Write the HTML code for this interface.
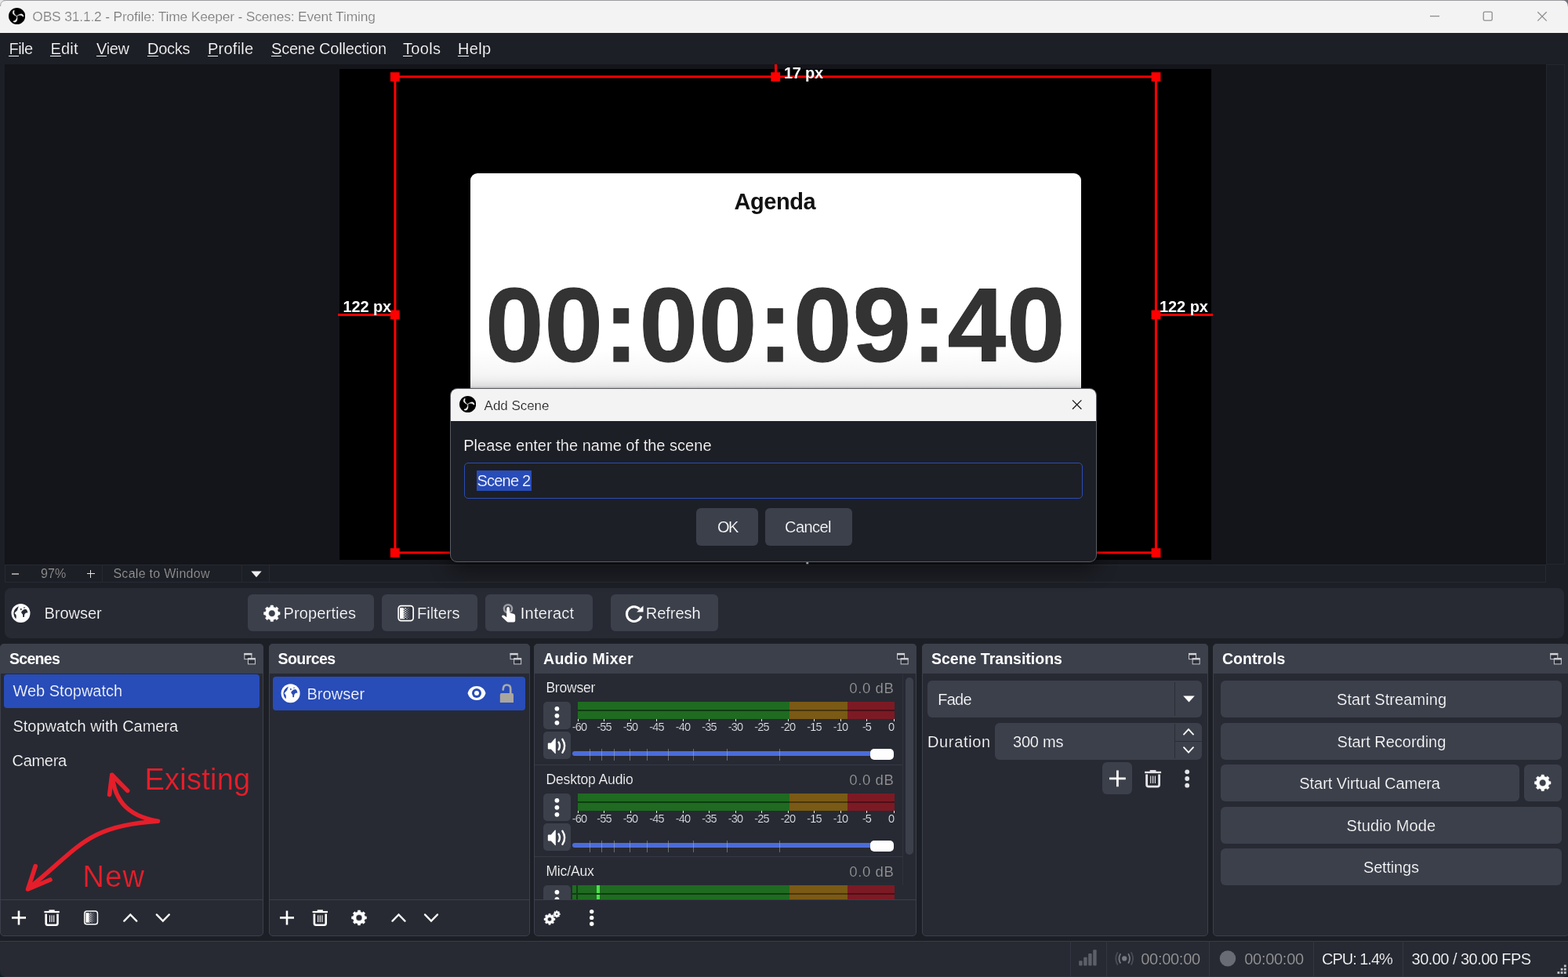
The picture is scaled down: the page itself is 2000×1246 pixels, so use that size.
<!DOCTYPE html>
<html lang="en"><head><meta charset="utf-8"><title>OBS 31.1.2 - Profile: Time Keeper - Scenes: Event Timing</title>
<style>
*{box-sizing:border-box;margin:0;padding:0}
html,body{width:2000px;height:1246px;overflow:hidden;background:#1d1f26}
body{font-family:"Liberation Sans",sans-serif;}
#app{will-change:transform;position:relative;width:2000px;height:1246px;overflow:hidden;background:#1d1f26}
#app div,#app span.t,#app svg{position:absolute}
.t{white-space:pre;display:block}
u{text-decoration:underline;text-decoration-thickness:1.4px;text-underline-offset:1.3px}

</style></head>
<body>
<div id="app">
<div style="left:0px;top:0px;width:2000px;height:42px;background:#f3f3f3;"></div>
<div style="left:0px;top:0px;width:2000px;height:1px;background:#9c9ca0;"></div>
<svg style="left:10.700000000000001px;top:10.000000000000002px;" width="21.2" height="21.2" viewBox="0 0 100 100"><circle cx="50" cy="50" r="50" fill="#000"/><g fill="#f3f3f3" stroke="#f3f3f3" stroke-width="1.8" stroke-linejoin="round"><path d="M30.5 15 Q10 35 50 51.5 Q27 36 34.5 16 Z"/><g transform="rotate(120 50 50)"><path d="M30.5 15 Q10 35 50 51.5 Q27 36 34.5 16 Z"/></g><g transform="rotate(240 50 50)"><path d="M30.5 15 Q10 35 50 51.5 Q27 36 34.5 16 Z"/></g></g></svg>
<span id="t1" class="t" style="left:41.30px;top:13.47px;font-size:17.4px;line-height:17.4px;color:#787878;letter-spacing:-0.164px;-webkit-text-stroke:0.22px #f3f3f3;">OBS 31.1.2 - Profile: Time Keeper - Scenes: Event Timing</span>
<svg style="left:0;top:0;overflow:visible" width="1" height="1"><path d="M0 0H8Q0 0 0 8Z" fill="#e6e6e6"/><path d="M0.5 8Q0.5 0.5 8 0.5" fill="none" stroke="#a4a4a8" stroke-width="1"/></svg>
<svg style="left:0;top:0;overflow:visible" width="1" height="1"><path d="M2000 0H1991Q2000 0 2000 9Z" fill="#6f7179"/></svg>
<svg style="left:1815px;top:8px;" width="170" height="26" viewBox="0 0 170 26"><g fill="none" stroke="#8e8e8e" stroke-width="1.3"><path d="M9 12.6H21"/><rect x="77.2" y="7.2" width="11" height="11" rx="1.6"/><path d="M146.3 7.2L157.7 18.6M157.7 7.2L146.3 18.6"/></g></svg>
<div style="left:0px;top:42px;width:2000px;height:40px;background:#1d1f26;"></div>
<span id="t2" class="t" style="left:11.50px;top:51.87px;font-size:20px;line-height:20px;color:#fefefe;letter-spacing:-0.535px;-webkit-text-stroke:0.22px #1d1f26;">File</span>
<div style="left:11.20px;top:70.50px;width:12.52px;height:1.4px;background:#fefefe"></div>
<span id="t3" class="t" style="left:64.50px;top:51.87px;font-size:20px;line-height:20px;color:#fefefe;letter-spacing:0.198px;-webkit-text-stroke:0.22px #1d1f26;">Edit</span>
<div style="left:64.20px;top:70.50px;width:13.64px;height:1.4px;background:#fefefe"></div>
<span id="t4" class="t" style="left:123.00px;top:51.87px;font-size:20px;line-height:20px;color:#fefefe;letter-spacing:-0.348px;-webkit-text-stroke:0.22px #1d1f26;">View</span>
<div style="left:122.70px;top:70.50px;width:13.64px;height:1.4px;background:#fefefe"></div>
<span id="t5" class="t" style="left:188.00px;top:51.87px;font-size:20px;line-height:20px;color:#fefefe;letter-spacing:-0.267px;-webkit-text-stroke:0.22px #1d1f26;">Docks</span>
<div style="left:187.70px;top:70.50px;width:14.74px;height:1.4px;background:#fefefe"></div>
<span id="t6" class="t" style="left:265.00px;top:51.87px;font-size:20px;line-height:20px;color:#fefefe;letter-spacing:0.239px;-webkit-text-stroke:0.22px #1d1f26;">Profile</span>
<div style="left:264.70px;top:70.50px;width:13.64px;height:1.4px;background:#fefefe"></div>
<span id="t7" class="t" style="left:346.00px;top:51.87px;font-size:20px;line-height:20px;color:#fefefe;letter-spacing:-0.198px;-webkit-text-stroke:0.22px #1d1f26;">Scene Collection</span>
<div style="left:345.70px;top:70.50px;width:13.64px;height:1.4px;background:#fefefe"></div>
<span id="t8" class="t" style="left:514.00px;top:51.87px;font-size:20px;line-height:20px;color:#fefefe;letter-spacing:0.328px;-webkit-text-stroke:0.22px #1d1f26;">Tools</span>
<div style="left:513.70px;top:70.50px;width:12.52px;height:1.4px;background:#fefefe"></div>
<span id="t9" class="t" style="left:584.00px;top:51.87px;font-size:20px;line-height:20px;color:#fefefe;letter-spacing:0.330px;-webkit-text-stroke:0.22px #1d1f26;">Help</span>
<div style="left:583.70px;top:70.50px;width:14.74px;height:1.4px;background:#fefefe"></div>
<div style="left:6px;top:82px;width:1966px;height:638px;background:#14151a;"></div>
<div style="left:1972px;top:82px;width:24px;height:638px;background:#1b1d25;border:1px solid #25272f;"></div>
<div style="left:433px;top:88px;width:1112px;height:626px;background:#000;"></div>
<div style="left:600px;top:221px;width:779px;height:300px;background:linear-gradient(#fff 0,#fff 225px,#f4f4f4 262px,#ececec 275px);border-radius:9px 9px 0 0;"></div>
<span id="t10" class="t" style="left:936.50px;top:243.45px;font-size:29px;line-height:29px;color:#111;font-weight:700;letter-spacing:-0.443px;">Agenda</span>
<span id="t11" class="t" style="left:619.00px;top:347.57px;font-size:134px;line-height:134px;color:#333;font-weight:700;letter-spacing:0.946px;-webkit-text-stroke:0.9px #2b2b2b;">00:00:09:40</span>
<svg style="left:0;top:0;overflow:visible" width="1" height="1"><rect x="503.9" y="97.9" width="970.5" height="607" fill="none" stroke="#ff0000" stroke-width="3"/></svg>
<svg style="left:0;top:0;overflow:visible" width="1" height="1"><rect x="497.90000000000003" y="92.2" width="11.8" height="11.6" fill="#ff0000"/></svg>
<svg style="left:0;top:0;overflow:visible" width="1" height="1"><rect x="1468.6" y="92.2" width="11.8" height="11.6" fill="#ff0000"/></svg>
<svg style="left:0;top:0;overflow:visible" width="1" height="1"><rect x="497.90000000000003" y="699.2" width="11.8" height="11.6" fill="#ff0000"/></svg>
<svg style="left:0;top:0;overflow:visible" width="1" height="1"><rect x="1468.6" y="699.2" width="11.8" height="11.6" fill="#ff0000"/></svg>
<svg style="left:0;top:0;overflow:visible" width="1" height="1"><rect x="983.3000000000001" y="92.2" width="11.8" height="11.6" fill="#ff0000"/></svg>
<svg style="left:0;top:0;overflow:visible" width="1" height="1"><rect x="497.90000000000003" y="395.59999999999997" width="11.8" height="11.6" fill="#ff0000"/></svg>
<svg style="left:0;top:0;overflow:visible" width="1" height="1"><rect x="1468.6" y="395.59999999999997" width="11.8" height="11.6" fill="#ff0000"/></svg>
<svg style="left:0;top:0;overflow:visible" width="1" height="1"><rect x="983.3000000000001" y="699.2" width="11.8" height="11.6" fill="#ff0000"/></svg>
<div style="left:987.5px;top:82px;width:3px;height:12px;background:#ff0000;"></div>
<div style="left:431px;top:400px;width:73px;height:3px;background:#ff0000;"></div>
<div style="left:1474px;top:400px;width:73px;height:3px;background:#ff0000;"></div>
<div style="left:987.5px;top:705px;width:3px;height:9px;background:#ff0000;"></div>
<span id="t12" class="t" style="left:1000.00px;top:83.07px;font-size:20px;line-height:20px;color:#fff;font-weight:700;letter-spacing:-0.255px;text-shadow:0 0 1.5px rgba(0,0,0,0.6);">17 px</span>
<span id="t13" class="t" style="left:437.50px;top:380.67px;font-size:20px;line-height:20px;color:#fff;font-weight:700;letter-spacing:-0.129px;text-shadow:0 0 1.5px rgba(0,0,0,0.6);">122 px</span>
<span id="t14" class="t" style="left:1479.00px;top:380.67px;font-size:20px;line-height:20px;color:#fff;font-weight:700;letter-spacing:-0.069px;text-shadow:0 0 1.5px rgba(0,0,0,0.6);">122 px</span>
<span id="t15" class="t" style="left:1000.00px;top:699.27px;font-size:20px;line-height:20px;color:#fff;font-weight:700;letter-spacing:-0.255px;text-shadow:0 0 1.5px rgba(0,0,0,0.6);clip-path:inset(0 0 0 0);">18 px</span>
<div style="left:6px;top:720px;width:1966px;height:23px;background:#1d1f26;border:1px solid #262932;"></div>
<div style="left:130px;top:720px;width:1px;height:23px;background:#262932;"></div>
<div style="left:308px;top:720px;width:1px;height:23px;background:#262932;"></div>
<div style="left:343px;top:720px;width:1px;height:23px;background:#262932;"></div>
<div style="left:14.8px;top:731.2px;width:9.5px;height:1.6px;background:#999999;"></div>
<div style="left:110.5px;top:730.8px;width:10px;height:1.6px;background:#e6e6e6;"></div>
<div style="left:114.7px;top:726.6px;width:1.6px;height:10px;background:#e6e6e6;"></div>
<span id="t16" class="t" style="left:52.00px;top:724.06px;font-size:16px;line-height:16px;color:#999999;letter-spacing:0.102px;-webkit-text-stroke:0.22px #1d1f26;">97%</span>
<span id="t17" class="t" style="left:144.40px;top:724.06px;font-size:16px;line-height:16px;color:#999999;letter-spacing:0.285px;-webkit-text-stroke:0.22px #1d1f26;">Scale to Window</span>
<svg style="left:320px;top:727.5px;" width="14" height="9" viewBox="0 0 14 9"><path d="M0.3 0.5H13.7L7 8.3Z" fill="#f0f0f0"/></svg>
<div style="left:6px;top:749.5px;width:1989px;height:64.5px;background:#272a33;border-radius:8px;"></div>
<svg style="left:0;top:0;overflow:visible" width="1" height="1"><g transform="translate(26.5 782) scale(1.0)"><circle r="12" fill="#fefefe"/><path d="M-3.2 -8.4 C-6.4 -6.8 -8.6 -4 -9.1 -0.6 C-9.2 2.2 -8.4 4.8 -6.5 6.9 L-6.0 6.8 C-5.7 5.2 -5.6 3.6 -6.1 2.3 C-6.7 1.3 -7.6 0.7 -7.9 -0.2 C-7.4 -1 -6.6 -1.4 -6.0 -2.2 C-5.2 -3 -4.4 -3.6 -4.2 -4.6 C-3.8 -6 -3.2 -7.2 -2.8 -8.5 Z" fill="#272a33"/><path d="M2.8 -3.8 C3.4 -4.6 5 -5.2 6.8 -5.0 C7.8 -4 8.6 -2.4 8.9 -0.8 C8.2 -0.4 7.2 -0.6 6.4 -0.3 C5.6 0.2 5 0.9 4.7 1.7 C4.5 2.8 4.6 3.9 4.4 4.9 C3.8 5.2 3.2 5.1 2.7 4.8 C2.6 3.8 2.8 2.7 2.6 1.7 C2.2 0.9 1.4 0.5 0.9 -0.2 C0.7 -0.8 0.7 -1.4 0.9 -2 C1.4 -2.7 2.2 -3.2 2.8 -3.8Z" fill="#272a33"/><ellipse cx="0.3" cy="-5.1" rx="0.85" ry="1.25" fill="#272a33"/><rect x="3.2" y="-7.5" width="2.5" height="0.9" rx="0.45" fill="#272a33"/></g></svg>
<span id="t18" class="t" style="left:56.50px;top:772.27px;font-size:20px;line-height:20px;color:#fefefe;letter-spacing:-0.032px;-webkit-text-stroke:0.22px #272a33;">Browser</span>
<div style="left:316px;top:758.3px;width:161px;height:47px;background:#3c404b;border-radius:6px;"></div>
<div style="left:486.5px;top:758.3px;width:122.5px;height:47px;background:#3c404b;border-radius:6px;"></div>
<div style="left:618.7px;top:758.3px;width:137.3px;height:47px;background:#3c404b;border-radius:6px;"></div>
<div style="left:779px;top:758.3px;width:137px;height:47px;background:#3c404b;border-radius:6px;"></div>
<svg style="left:0;top:0;overflow:visible" width="1" height="1"><path d="M344.94 774.19 L345.17 772.03 L348.43 772.03 L348.66 774.19 L351.22 775.25 L352.91 773.89 L355.21 776.19 L353.85 777.88 L354.91 780.44 L357.07 780.67 L357.07 783.93 L354.91 784.16 L353.85 786.72 L355.21 788.41 L352.91 790.71 L351.22 789.35 L348.66 790.41 L348.43 792.57 L345.17 792.57 L344.94 790.41 L342.38 789.35 L340.69 790.71 L338.39 788.41 L339.75 786.72 L338.69 784.16 L336.53 783.93 L336.53 780.67 L338.69 780.44 L339.75 777.88 L338.39 776.19 L340.69 773.89 L342.38 775.25Z M342.54 782.30 a4.264 4.264 0 1 0 8.528 0 a4.264 4.264 0 1 0 -8.528 0Z" fill="#fefefe" fill-rule="evenodd" stroke="#fefefe" stroke-width="0.5" stroke-linejoin="round"/></svg>
<span id="t19" class="t" style="left:361.40px;top:772.27px;font-size:20px;line-height:20px;color:#fefefe;letter-spacing:0.161px;-webkit-text-stroke:0.22px #3c404b;">Properties</span>
<svg style="left:0;top:0;overflow:visible" width="1" height="1"><g transform="translate(507.3 771.8) scale(0.9857)"><rect x="2.2" y="2.2" width="16.6" height="16.6" rx="1.5" fill="#30333c"/><rect x="2.7" y="3.3" width="4.9" height="14.4" fill="#fefefe"/><rect x="7.6" y="4.74" width="1.3" height="1.44" fill="#fefefe"/><rect x="8.9" y="3.30" width="2.1" height="1.44" fill="#d4d5da"/><rect x="11" y="4.74" width="1.8" height="1.44" fill="#9a9ca5"/><rect x="12.8" y="3.30" width="1.8" height="1.44" fill="#6c6f7a"/><rect x="14.6" y="4.74" width="1.6" height="1.44" fill="#4a4d58"/><rect x="7.6" y="7.62" width="1.3" height="1.44" fill="#fefefe"/><rect x="8.9" y="6.18" width="2.1" height="1.44" fill="#d4d5da"/><rect x="11" y="7.62" width="1.8" height="1.44" fill="#9a9ca5"/><rect x="12.8" y="6.18" width="1.8" height="1.44" fill="#6c6f7a"/><rect x="14.6" y="7.62" width="1.6" height="1.44" fill="#4a4d58"/><rect x="7.6" y="10.50" width="1.3" height="1.44" fill="#fefefe"/><rect x="8.9" y="9.06" width="2.1" height="1.44" fill="#d4d5da"/><rect x="11" y="10.50" width="1.8" height="1.44" fill="#9a9ca5"/><rect x="12.8" y="9.06" width="1.8" height="1.44" fill="#6c6f7a"/><rect x="14.6" y="10.50" width="1.6" height="1.44" fill="#4a4d58"/><rect x="7.6" y="13.38" width="1.3" height="1.44" fill="#fefefe"/><rect x="8.9" y="11.94" width="2.1" height="1.44" fill="#d4d5da"/><rect x="11" y="13.38" width="1.8" height="1.44" fill="#9a9ca5"/><rect x="12.8" y="11.94" width="1.8" height="1.44" fill="#6c6f7a"/><rect x="14.6" y="13.38" width="1.6" height="1.44" fill="#4a4d58"/><rect x="7.6" y="16.26" width="1.3" height="1.44" fill="#fefefe"/><rect x="8.9" y="14.82" width="2.1" height="1.44" fill="#d4d5da"/><rect x="11" y="16.26" width="1.8" height="1.44" fill="#9a9ca5"/><rect x="12.8" y="14.82" width="1.8" height="1.44" fill="#6c6f7a"/><rect x="14.6" y="16.26" width="1.6" height="1.44" fill="#4a4d58"/><rect x="0.85" y="0.85" width="19.3" height="19.3" rx="3.6" fill="none" stroke="#fefefe" stroke-width="1.7"/></g></svg>
<span id="t20" class="t" style="left:532.00px;top:772.27px;font-size:20px;line-height:20px;color:#fefefe;letter-spacing:-0.007px;-webkit-text-stroke:0.22px #3c404b;">Filters</span>
<svg style="left:0;top:0;overflow:visible" width="1" height="1"><g transform="translate(639.4 769.9)"><circle cx="8.6" cy="6.4" r="5" fill="none" stroke="#9a9ca3" stroke-width="2.6"/><path d="M6.8 6.2 Q6.8 4.2 8.7 4.2 Q10.6 4.2 10.6 6.2 V11.6 L15.6 12.8 Q17.8 13.4 17.8 15.6 V21.6 Q17.8 23.6 15.8 23.6 H9 Q7.6 23.6 6.6 22.4 L1 17.2 Q0 16 1.2 15 Q2.4 14.2 3.8 15.2 L6.8 17.4 Z" fill="#fefefe"/></g></svg>
<span id="t21" class="t" style="left:663.80px;top:772.27px;font-size:20px;line-height:20px;color:#fefefe;letter-spacing:0.237px;-webkit-text-stroke:0.22px #3c404b;">Interact</span>
<svg style="left:0;top:0;overflow:visible" width="1" height="1"><g transform="translate(808.6 783.2)"><path d="M7.2 -6.4 A9.4 9.4 0 1 0 9.2 2.6" fill="none" stroke="#fefefe" stroke-width="3"/><path d="M3.6 -2.6 H11.9 V-10.6 Z" fill="#fefefe"/></g></svg>
<span id="t22" class="t" style="left:823.80px;top:772.27px;font-size:20px;line-height:20px;color:#fefefe;letter-spacing:-0.018px;-webkit-text-stroke:0.22px #3c404b;">Refresh</span>
<div style="left:0px;top:821px;width:336.3px;height:373px;background:#272a33;border-radius:5px;border:1px solid #3c404b;"></div>
<div style="left:0px;top:821px;width:336.3px;height:38px;background:#3c404b;border-radius:5px 5px 0 0;"></div>
<span id="t23" class="t" style="left:12.00px;top:831.19px;font-size:19.5px;line-height:19.5px;color:#fefefe;font-weight:700;letter-spacing:-0.691px;">Scenes</span>
<svg style="left:0;top:0;overflow:visible" width="1" height="1"><g stroke="#c9cbd0" stroke-width="1" fill="#2c2e38"><rect x="311.85" y="833.55" width="9" height="7.1"/><rect x="311.85" y="833.40" width="9" height="1.5" fill="#fefefe"/><rect x="316.45" y="839.90" width="9" height="7"/><rect x="316.45" y="839.75" width="9" height="1.2" fill="#fefefe"/></g></svg>
<div style="left:343px;top:821px;width:332.5px;height:373px;background:#272a33;border-radius:5px;border:1px solid #3c404b;"></div>
<div style="left:343px;top:821px;width:332.5px;height:38px;background:#3c404b;border-radius:5px 5px 0 0;"></div>
<span id="t24" class="t" style="left:354.50px;top:831.19px;font-size:19.5px;line-height:19.5px;color:#fefefe;font-weight:700;letter-spacing:-0.568px;">Sources</span>
<svg style="left:0;top:0;overflow:visible" width="1" height="1"><g stroke="#c9cbd0" stroke-width="1" fill="#2c2e38"><rect x="651.05" y="833.55" width="9" height="7.1"/><rect x="651.05" y="833.40" width="9" height="1.5" fill="#fefefe"/><rect x="655.65" y="839.90" width="9" height="7"/><rect x="655.65" y="839.75" width="9" height="1.2" fill="#fefefe"/></g></svg>
<div style="left:681px;top:821px;width:488px;height:373px;background:#272a33;border-radius:5px;border:1px solid #3c404b;"></div>
<div style="left:681px;top:821px;width:488px;height:38px;background:#3c404b;border-radius:5px 5px 0 0;"></div>
<span id="t25" class="t" style="left:693.00px;top:831.19px;font-size:19.5px;line-height:19.5px;color:#fefefe;font-weight:700;letter-spacing:0.300px;">Audio Mixer</span>
<svg style="left:0;top:0;overflow:visible" width="1" height="1"><g stroke="#c9cbd0" stroke-width="1" fill="#2c2e38"><rect x="1144.55" y="833.55" width="9" height="7.1"/><rect x="1144.55" y="833.40" width="9" height="1.5" fill="#fefefe"/><rect x="1149.15" y="839.90" width="9" height="7"/><rect x="1149.15" y="839.75" width="9" height="1.2" fill="#fefefe"/></g></svg>
<div style="left:1176px;top:821px;width:365px;height:373px;background:#272a33;border-radius:5px;border:1px solid #3c404b;"></div>
<div style="left:1176px;top:821px;width:365px;height:38px;background:#3c404b;border-radius:5px 5px 0 0;"></div>
<span id="t26" class="t" style="left:1188.00px;top:831.19px;font-size:19.5px;line-height:19.5px;color:#fefefe;font-weight:700;">Scene Transitions</span>
<svg style="left:0;top:0;overflow:visible" width="1" height="1"><g stroke="#c9cbd0" stroke-width="1" fill="#2c2e38"><rect x="1516.55" y="833.55" width="9" height="7.1"/><rect x="1516.55" y="833.40" width="9" height="1.5" fill="#fefefe"/><rect x="1521.15" y="839.90" width="9" height="7"/><rect x="1521.15" y="839.75" width="9" height="1.2" fill="#fefefe"/></g></svg>
<div style="left:1547px;top:821px;width:455.20000000000005px;height:373px;background:#272a33;border-radius:5px;border:1px solid #3c404b;"></div>
<div style="left:1547px;top:821px;width:455.20000000000005px;height:38px;background:#3c404b;border-radius:5px 5px 0 0;"></div>
<span id="t27" class="t" style="left:1559.00px;top:831.19px;font-size:19.5px;line-height:19.5px;color:#fefefe;font-weight:700;letter-spacing:0.012px;">Controls</span>
<svg style="left:0;top:0;overflow:visible" width="1" height="1"><g stroke="#c9cbd0" stroke-width="1" fill="#2c2e38"><rect x="1977.75" y="833.55" width="9" height="7.1"/><rect x="1977.75" y="833.40" width="9" height="1.5" fill="#fefefe"/><rect x="1982.35" y="839.90" width="9" height="7"/><rect x="1982.35" y="839.75" width="9" height="1.2" fill="#fefefe"/></g></svg>
<div style="left:5px;top:860px;width:326px;height:43px;background:#284cb8;border-radius:4px;"></div>
<span id="t28" class="t" style="left:16.50px;top:871.07px;font-size:20px;line-height:20px;color:#fefefe;letter-spacing:-0.007px;-webkit-text-stroke:0.22px #284cb8;">Web Stopwatch</span>
<span id="t29" class="t" style="left:16.50px;top:915.57px;font-size:20px;line-height:20px;color:#fefefe;letter-spacing:-0.029px;-webkit-text-stroke:0.22px #272a33;">Stopwatch with Camera</span>
<span id="t30" class="t" style="left:15.50px;top:960.07px;font-size:20px;line-height:20px;color:#fefefe;letter-spacing:-0.302px;-webkit-text-stroke:0.22px #272a33;">Camera</span>
<span id="t31" class="t" style="left:184.50px;top:975.13px;font-size:38px;line-height:38px;color:#e61e2a;letter-spacing:0.225px;-webkit-text-stroke:0.22px #272a33;">Existing</span>
<span id="t32" class="t" style="left:105.50px;top:1099.33px;font-size:38px;line-height:38px;color:#e61e2a;letter-spacing:1.212px;-webkit-text-stroke:0.22px #272a33;">New</span>
<svg style="left:0;top:0;overflow:visible" width="1" height="1"><g fill="none" stroke="#e61e2a" stroke-width="5.6" stroke-linecap="round" stroke-linejoin="round"><path d="M142.8 988.5 C146 1016 158 1040 201.5 1047.2 C109.7 1052.6 99 1083.2 36.5 1133"/><path d="M139.6 1013.4 L142.8 988.3 L162.6 1008.4"/><path d="M45.2 1104.6 L35.6 1134 L64 1122"/></g></svg>
<div style="left:1px;top:1147px;width:334.3px;height:1px;background:#3c404b;"></div>
<svg style="left:0;top:0;overflow:visible" width="1" height="1"><path d="M15 1170.4H33M24 1161.4V1179.4" stroke="#fefefe" stroke-width="2.6" fill="none"/></svg>
<svg style="left:0;top:0;overflow:visible" width="1" height="1"><g transform="translate(66.1 1170.6) scale(1.0)" fill="none" stroke="#fefefe"><path d="M-9.7 -7.6H9.7" stroke-width="2.2"/><path d="M-3.6 -9.4H3.6" stroke-width="1.8"/><path d="M-7.4 -5.2V7 Q-7.4 9.2 -5.2 9.2H5.2Q7.4 9.2 7.4 7V-5.2" stroke-width="2.6"/><path d="M-2.6 -3.4V5.4M0 -3.4V5.4M2.6 -3.4V5.4" stroke-width="1.1"/></g></svg>
<svg style="left:0;top:0;overflow:visible" width="1" height="1"><g transform="translate(107 1161.3) scale(0.8667)"><rect x="2.2" y="2.2" width="16.6" height="16.6" rx="1.5" fill="#30333c"/><rect x="2.7" y="3.3" width="4.9" height="14.4" fill="#fefefe"/><rect x="7.6" y="4.74" width="1.3" height="1.44" fill="#fefefe"/><rect x="8.9" y="3.30" width="2.1" height="1.44" fill="#d4d5da"/><rect x="11" y="4.74" width="1.8" height="1.44" fill="#9a9ca5"/><rect x="12.8" y="3.30" width="1.8" height="1.44" fill="#6c6f7a"/><rect x="14.6" y="4.74" width="1.6" height="1.44" fill="#4a4d58"/><rect x="7.6" y="7.62" width="1.3" height="1.44" fill="#fefefe"/><rect x="8.9" y="6.18" width="2.1" height="1.44" fill="#d4d5da"/><rect x="11" y="7.62" width="1.8" height="1.44" fill="#9a9ca5"/><rect x="12.8" y="6.18" width="1.8" height="1.44" fill="#6c6f7a"/><rect x="14.6" y="7.62" width="1.6" height="1.44" fill="#4a4d58"/><rect x="7.6" y="10.50" width="1.3" height="1.44" fill="#fefefe"/><rect x="8.9" y="9.06" width="2.1" height="1.44" fill="#d4d5da"/><rect x="11" y="10.50" width="1.8" height="1.44" fill="#9a9ca5"/><rect x="12.8" y="9.06" width="1.8" height="1.44" fill="#6c6f7a"/><rect x="14.6" y="10.50" width="1.6" height="1.44" fill="#4a4d58"/><rect x="7.6" y="13.38" width="1.3" height="1.44" fill="#fefefe"/><rect x="8.9" y="11.94" width="2.1" height="1.44" fill="#d4d5da"/><rect x="11" y="13.38" width="1.8" height="1.44" fill="#9a9ca5"/><rect x="12.8" y="11.94" width="1.8" height="1.44" fill="#6c6f7a"/><rect x="14.6" y="13.38" width="1.6" height="1.44" fill="#4a4d58"/><rect x="7.6" y="16.26" width="1.3" height="1.44" fill="#fefefe"/><rect x="8.9" y="14.82" width="2.1" height="1.44" fill="#d4d5da"/><rect x="11" y="16.26" width="1.8" height="1.44" fill="#9a9ca5"/><rect x="12.8" y="14.82" width="1.8" height="1.44" fill="#6c6f7a"/><rect x="14.6" y="16.26" width="1.6" height="1.44" fill="#4a4d58"/><rect x="0.85" y="0.85" width="19.3" height="19.3" rx="3.6" fill="none" stroke="#fefefe" stroke-width="1.7"/></g></svg>
<svg style="left:0;top:0;overflow:visible" width="1" height="1"><path d="M158.3 1174.6L166.3 1166.4L174.3 1174.6" stroke="#fefefe" stroke-width="2.3" fill="none" stroke-linejoin="miter" stroke-linecap="round"/></svg>
<svg style="left:0;top:0;overflow:visible" width="1" height="1"><path d="M199.8 1166.4L207.8 1174.6L215.8 1166.4" stroke="#fefefe" stroke-width="2.3" fill="none" stroke-linejoin="miter" stroke-linecap="round"/></svg>
<div style="left:347.7px;top:862.7px;width:322px;height:43px;background:#284cb8;border-radius:4px;"></div>
<svg style="left:0;top:0;overflow:visible" width="1" height="1"><g transform="translate(370.6 884.2) scale(1.0)"><circle r="12" fill="#fefefe"/><path d="M-3.2 -8.4 C-6.4 -6.8 -8.6 -4 -9.1 -0.6 C-9.2 2.2 -8.4 4.8 -6.5 6.9 L-6.0 6.8 C-5.7 5.2 -5.6 3.6 -6.1 2.3 C-6.7 1.3 -7.6 0.7 -7.9 -0.2 C-7.4 -1 -6.6 -1.4 -6.0 -2.2 C-5.2 -3 -4.4 -3.6 -4.2 -4.6 C-3.8 -6 -3.2 -7.2 -2.8 -8.5 Z" fill="#284cb8"/><path d="M2.8 -3.8 C3.4 -4.6 5 -5.2 6.8 -5.0 C7.8 -4 8.6 -2.4 8.9 -0.8 C8.2 -0.4 7.2 -0.6 6.4 -0.3 C5.6 0.2 5 0.9 4.7 1.7 C4.5 2.8 4.6 3.9 4.4 4.9 C3.8 5.2 3.2 5.1 2.7 4.8 C2.6 3.8 2.8 2.7 2.6 1.7 C2.2 0.9 1.4 0.5 0.9 -0.2 C0.7 -0.8 0.7 -1.4 0.9 -2 C1.4 -2.7 2.2 -3.2 2.8 -3.8Z" fill="#284cb8"/><ellipse cx="0.3" cy="-5.1" rx="0.85" ry="1.25" fill="#284cb8"/><rect x="3.2" y="-7.5" width="2.5" height="0.9" rx="0.45" fill="#284cb8"/></g></svg>
<span id="t33" class="t" style="left:391.40px;top:874.57px;font-size:20px;line-height:20px;color:#fefefe;letter-spacing:0.068px;-webkit-text-stroke:0.22px #284cb8;">Browser</span>
<svg style="left:0;top:0;overflow:visible" width="1" height="1"><g transform="translate(608 884.1)"><path d="M-11.5 0 C-8.5 -12 8.5 -12 11.5 0 C8.5 12 -8.5 12 -11.5 0Z" fill="#fefefe"/><circle r="6" fill="#284cb8"/><circle r="3" fill="#fefefe"/></g></svg>
<svg style="left:0;top:0;overflow:visible" width="1" height="1"><g transform="translate(637.8 872)"><path d="M0 14 Q0 12 2 12 H15.2 Q17.2 12 17.2 14 V24 H0Z" fill="#a9a69e"/><path d="M13.4 12.4 V6.6 Q13.4 1.5 8.6 1.5 Q4 1.5 3.9 7.6" fill="none" stroke="#a9aaa8" stroke-width="2.7" stroke-linecap="round"/></g></svg>
<div style="left:344px;top:1147px;width:330.5px;height:1px;background:#3c404b;"></div>
<svg style="left:0;top:0;overflow:visible" width="1" height="1"><path d="M357 1170.4H375M366 1161.4V1179.4" stroke="#fefefe" stroke-width="2.6" fill="none"/></svg>
<svg style="left:0;top:0;overflow:visible" width="1" height="1"><g transform="translate(408.3 1170.6) scale(1.0)" fill="none" stroke="#fefefe"><path d="M-9.7 -7.6H9.7" stroke-width="2.2"/><path d="M-3.6 -9.4H3.6" stroke-width="1.8"/><path d="M-7.4 -5.2V7 Q-7.4 9.2 -5.2 9.2H5.2Q7.4 9.2 7.4 7V-5.2" stroke-width="2.6"/><path d="M-2.6 -3.4V5.4M0 -3.4V5.4M2.6 -3.4V5.4" stroke-width="1.1"/></g></svg>
<svg style="left:0;top:0;overflow:visible" width="1" height="1"><path d="M456.28 1162.91 L456.50 1160.92 L459.50 1160.92 L459.72 1162.91 L462.08 1163.89 L463.64 1162.63 L465.77 1164.76 L464.51 1166.32 L465.49 1168.68 L467.48 1168.90 L467.48 1171.90 L465.49 1172.12 L464.51 1174.48 L465.77 1176.04 L463.64 1178.17 L462.08 1176.91 L459.72 1177.89 L459.50 1179.88 L456.50 1179.88 L456.28 1177.89 L453.92 1176.91 L452.36 1178.17 L450.23 1176.04 L451.49 1174.48 L450.51 1172.12 L448.52 1171.90 L448.52 1168.90 L450.51 1168.68 L451.49 1166.32 L450.23 1164.76 L452.36 1162.63 L453.92 1163.89Z M454.06 1170.40 a3.9359999999999995 3.9359999999999995 0 1 0 7.871999999999999 0 a3.9359999999999995 3.9359999999999995 0 1 0 -7.871999999999999 0Z" fill="#fefefe" fill-rule="evenodd" stroke="#fefefe" stroke-width="0.5" stroke-linejoin="round"/></svg>
<svg style="left:0;top:0;overflow:visible" width="1" height="1"><path d="M500.5 1174.6L508.5 1166.4L516.5 1174.6" stroke="#fefefe" stroke-width="2.3" fill="none" stroke-linejoin="miter" stroke-linecap="round"/></svg>
<svg style="left:0;top:0;overflow:visible" width="1" height="1"><path d="M542 1166.4L550 1174.6L558 1166.4" stroke="#fefefe" stroke-width="2.3" fill="none" stroke-linejoin="miter" stroke-linecap="round"/></svg>
<div style="left:1151px;top:860px;width:1px;height:287px;background:#30333d;"></div>
<div style="left:1155px;top:864px;width:9.6px;height:226px;background:#3c404b;border-radius:5px;"></div>
<span id="t34" class="t" style="left:696.40px;top:869.19px;font-size:17.5px;line-height:17.5px;color:#fefefe;letter-spacing:-0.209px;-webkit-text-stroke:0.22px #272a33;">Browser</span>
<span id="t35" class="t" style="left:1083.30px;top:868.66px;font-size:18.6px;line-height:18.6px;color:#999999;letter-spacing:0.569px;-webkit-text-stroke:0.22px #272a33;">0.0 dB</span>
<div style="left:737px;top:895px;width:270px;height:10px;background:#1f6b21;"></div>
<div style="left:1007px;top:895px;width:74px;height:10px;background:#7a5a15;"></div>
<div style="left:1081px;top:895px;width:60px;height:10px;background:#7c1a24;"></div>
<div style="left:737px;top:907px;width:270px;height:10px;background:#1f6b21;"></div>
<div style="left:1007px;top:907px;width:74px;height:10px;background:#7a5a15;"></div>
<div style="left:1081px;top:907px;width:60px;height:10px;background:#7c1a24;"></div>
<div style="left:737px;top:905px;width:404px;height:2px;background:#0f3d12;"></div>
<div style="left:1007px;top:905px;width:74px;height:2px;background:#4a360c;"></div>
<div style="left:1081px;top:905px;width:60px;height:2px;background:#4d0f15;"></div>
<div style="left:693px;top:895px;width:34.6px;height:34.8px;background:#3c404b;border-radius:5px;"></div>
<svg style="left:0;top:0;overflow:visible" width="1" height="1"><circle cx="710.4" cy="903.8" r="2.9" fill="#fefefe"/><circle cx="710.4" cy="912.8" r="2.9" fill="#fefefe"/><circle cx="710.4" cy="921.8" r="2.9" fill="#fefefe"/></svg>
<div style="left:736.5px;top:917px;width:1.4px;height:3.4px;background:#e8e8e8;"></div>
<span id="t36" class="t" style="left:729.80px;top:919.53px;font-size:14.5px;line-height:14.5px;color:#e9e9ee;letter-spacing:-0.846px;-webkit-text-stroke:0.22px #272a33;">-60</span>
<div style="left:770.0px;top:917px;width:1.4px;height:3.4px;background:#e8e8e8;"></div>
<span id="t37" class="t" style="left:761.30px;top:919.53px;font-size:14.5px;line-height:14.5px;color:#e9e9ee;letter-spacing:-0.846px;-webkit-text-stroke:0.22px #272a33;">-55</span>
<div style="left:803.5px;top:917px;width:1.4px;height:3.4px;background:#e8e8e8;"></div>
<span id="t38" class="t" style="left:794.80px;top:919.53px;font-size:14.5px;line-height:14.5px;color:#e9e9ee;letter-spacing:-0.846px;-webkit-text-stroke:0.22px #272a33;">-50</span>
<div style="left:837.0px;top:917px;width:1.4px;height:3.4px;background:#e8e8e8;"></div>
<span id="t39" class="t" style="left:828.30px;top:919.53px;font-size:14.5px;line-height:14.5px;color:#e9e9ee;letter-spacing:-0.846px;-webkit-text-stroke:0.22px #272a33;">-45</span>
<div style="left:870.5px;top:917px;width:1.4px;height:3.4px;background:#e8e8e8;"></div>
<span id="t40" class="t" style="left:861.80px;top:919.53px;font-size:14.5px;line-height:14.5px;color:#e9e9ee;letter-spacing:-0.846px;-webkit-text-stroke:0.22px #272a33;">-40</span>
<div style="left:904.0px;top:917px;width:1.4px;height:3.4px;background:#e8e8e8;"></div>
<span id="t41" class="t" style="left:895.30px;top:919.53px;font-size:14.5px;line-height:14.5px;color:#e9e9ee;letter-spacing:-0.846px;-webkit-text-stroke:0.22px #272a33;">-35</span>
<div style="left:937.5px;top:917px;width:1.4px;height:3.4px;background:#e8e8e8;"></div>
<span id="t42" class="t" style="left:928.80px;top:919.53px;font-size:14.5px;line-height:14.5px;color:#e9e9ee;letter-spacing:-0.846px;-webkit-text-stroke:0.22px #272a33;">-30</span>
<div style="left:971.0px;top:917px;width:1.4px;height:3.4px;background:#e8e8e8;"></div>
<span id="t43" class="t" style="left:962.30px;top:919.53px;font-size:14.5px;line-height:14.5px;color:#e9e9ee;letter-spacing:-0.846px;-webkit-text-stroke:0.22px #272a33;">-25</span>
<div style="left:1004.5px;top:917px;width:1.4px;height:3.4px;background:#e8e8e8;"></div>
<span id="t44" class="t" style="left:995.80px;top:919.53px;font-size:14.5px;line-height:14.5px;color:#e9e9ee;letter-spacing:-0.846px;-webkit-text-stroke:0.22px #272a33;">-20</span>
<div style="left:1038.0px;top:917px;width:1.4px;height:3.4px;background:#e8e8e8;"></div>
<span id="t45" class="t" style="left:1029.30px;top:919.53px;font-size:14.5px;line-height:14.5px;color:#e9e9ee;letter-spacing:-0.846px;-webkit-text-stroke:0.22px #272a33;">-15</span>
<div style="left:1071.5px;top:917px;width:1.4px;height:3.4px;background:#e8e8e8;"></div>
<span id="t46" class="t" style="left:1062.80px;top:919.53px;font-size:14.5px;line-height:14.5px;color:#e9e9ee;letter-spacing:-0.846px;-webkit-text-stroke:0.22px #272a33;">-10</span>
<div style="left:1105.0px;top:917px;width:1.4px;height:3.4px;background:#e8e8e8;"></div>
<span id="t47" class="t" style="left:1100.10px;top:919.53px;font-size:14.5px;line-height:14.5px;color:#e9e9ee;letter-spacing:-1.229px;-webkit-text-stroke:0.22px #272a33;">-5</span>
<div style="left:1139.5px;top:917px;width:1.4px;height:3.4px;background:#e8e8e8;"></div>
<span id="t48" class="t" style="left:1132.90px;top:919.53px;font-size:14.5px;line-height:14.5px;color:#e9e9ee;-webkit-text-stroke:0.22px #272a33;">0</span>
<div style="left:693px;top:933.4px;width:34.6px;height:34.8px;background:#3c404b;border-radius:5px;"></div>
<svg style="left:0;top:0;overflow:visible" width="1" height="1"><g transform="translate(698.4 941)"><path d="M0.4 7.4 Q0.4 6.4 1.4 6.4 H4.4 L9.6 0.6 Q10.4 0 10.4 1 V19.6 Q10.4 20.6 9.6 20 L4.4 14.4 H1.4 Q0.4 14.4 0.4 13.4Z" fill="#fefefe"/><path d="M14.2 5.6 Q17 10.3 14.2 15" fill="none" stroke="#fefefe" stroke-width="2.4" stroke-linecap="round"/><path d="M19 1.8 Q24.6 10.3 19 18.8" fill="none" stroke="#fefefe" stroke-width="2.4" stroke-linecap="round"/></g></svg>
<div style="left:729.5px;top:958px;width:385px;height:6px;background:#4b6cd9;border-radius:3px;"></div>
<div style="left:752.0px;top:955px;width:1.1px;height:15px;background:rgba(170,174,186,0.5);"></div>
<div style="left:767.1px;top:955px;width:1.1px;height:15px;background:rgba(170,174,186,0.5);"></div>
<div style="left:783.1px;top:955px;width:1.1px;height:15px;background:rgba(170,174,186,0.5);"></div>
<div style="left:802.5px;top:955px;width:1.1px;height:15px;background:rgba(170,174,186,0.5);"></div>
<div style="left:824.5px;top:955px;width:1.1px;height:15px;background:rgba(170,174,186,0.5);"></div>
<div style="left:851.5px;top:955px;width:1.1px;height:15px;background:rgba(170,174,186,0.5);"></div>
<div style="left:884.0px;top:955px;width:1.1px;height:15px;background:rgba(170,174,186,0.5);"></div>
<div style="left:927.1px;top:955px;width:1.1px;height:15px;background:rgba(170,174,186,0.5);"></div>
<div style="left:993.8px;top:955px;width:1.1px;height:15px;background:rgba(170,174,186,0.5);"></div>
<div style="left:1110.4px;top:955px;width:29.6px;height:14px;background:#fefefe;border-radius:5px;"></div>
<div style="left:682px;top:975px;width:469px;height:1px;background:#353944;"></div>
<span id="t49" class="t" style="left:696.40px;top:986.19px;font-size:17.5px;line-height:17.5px;color:#fefefe;letter-spacing:-0.124px;-webkit-text-stroke:0.22px #272a33;">Desktop Audio</span>
<span id="t50" class="t" style="left:1083.30px;top:985.66px;font-size:18.6px;line-height:18.6px;color:#999999;letter-spacing:0.569px;-webkit-text-stroke:0.22px #272a33;">0.0 dB</span>
<div style="left:737px;top:1012px;width:270px;height:10px;background:#1f6b21;"></div>
<div style="left:1007px;top:1012px;width:74px;height:10px;background:#7a5a15;"></div>
<div style="left:1081px;top:1012px;width:60px;height:10px;background:#7c1a24;"></div>
<div style="left:737px;top:1024px;width:270px;height:10px;background:#1f6b21;"></div>
<div style="left:1007px;top:1024px;width:74px;height:10px;background:#7a5a15;"></div>
<div style="left:1081px;top:1024px;width:60px;height:10px;background:#7c1a24;"></div>
<div style="left:737px;top:1022px;width:404px;height:2px;background:#0f3d12;"></div>
<div style="left:1007px;top:1022px;width:74px;height:2px;background:#4a360c;"></div>
<div style="left:1081px;top:1022px;width:60px;height:2px;background:#4d0f15;"></div>
<div style="left:693px;top:1012px;width:34.6px;height:34.8px;background:#3c404b;border-radius:5px;"></div>
<svg style="left:0;top:0;overflow:visible" width="1" height="1"><circle cx="710.4" cy="1020.8" r="2.9" fill="#fefefe"/><circle cx="710.4" cy="1029.8" r="2.9" fill="#fefefe"/><circle cx="710.4" cy="1038.8" r="2.9" fill="#fefefe"/></svg>
<div style="left:736.5px;top:1034px;width:1.4px;height:3.4px;background:#e8e8e8;"></div>
<span id="t51" class="t" style="left:729.80px;top:1036.53px;font-size:14.5px;line-height:14.5px;color:#e9e9ee;letter-spacing:-0.846px;-webkit-text-stroke:0.22px #272a33;">-60</span>
<div style="left:770.0px;top:1034px;width:1.4px;height:3.4px;background:#e8e8e8;"></div>
<span id="t52" class="t" style="left:761.30px;top:1036.53px;font-size:14.5px;line-height:14.5px;color:#e9e9ee;letter-spacing:-0.846px;-webkit-text-stroke:0.22px #272a33;">-55</span>
<div style="left:803.5px;top:1034px;width:1.4px;height:3.4px;background:#e8e8e8;"></div>
<span id="t53" class="t" style="left:794.80px;top:1036.53px;font-size:14.5px;line-height:14.5px;color:#e9e9ee;letter-spacing:-0.846px;-webkit-text-stroke:0.22px #272a33;">-50</span>
<div style="left:837.0px;top:1034px;width:1.4px;height:3.4px;background:#e8e8e8;"></div>
<span id="t54" class="t" style="left:828.30px;top:1036.53px;font-size:14.5px;line-height:14.5px;color:#e9e9ee;letter-spacing:-0.846px;-webkit-text-stroke:0.22px #272a33;">-45</span>
<div style="left:870.5px;top:1034px;width:1.4px;height:3.4px;background:#e8e8e8;"></div>
<span id="t55" class="t" style="left:861.80px;top:1036.53px;font-size:14.5px;line-height:14.5px;color:#e9e9ee;letter-spacing:-0.846px;-webkit-text-stroke:0.22px #272a33;">-40</span>
<div style="left:904.0px;top:1034px;width:1.4px;height:3.4px;background:#e8e8e8;"></div>
<span id="t56" class="t" style="left:895.30px;top:1036.53px;font-size:14.5px;line-height:14.5px;color:#e9e9ee;letter-spacing:-0.846px;-webkit-text-stroke:0.22px #272a33;">-35</span>
<div style="left:937.5px;top:1034px;width:1.4px;height:3.4px;background:#e8e8e8;"></div>
<span id="t57" class="t" style="left:928.80px;top:1036.53px;font-size:14.5px;line-height:14.5px;color:#e9e9ee;letter-spacing:-0.846px;-webkit-text-stroke:0.22px #272a33;">-30</span>
<div style="left:971.0px;top:1034px;width:1.4px;height:3.4px;background:#e8e8e8;"></div>
<span id="t58" class="t" style="left:962.30px;top:1036.53px;font-size:14.5px;line-height:14.5px;color:#e9e9ee;letter-spacing:-0.846px;-webkit-text-stroke:0.22px #272a33;">-25</span>
<div style="left:1004.5px;top:1034px;width:1.4px;height:3.4px;background:#e8e8e8;"></div>
<span id="t59" class="t" style="left:995.80px;top:1036.53px;font-size:14.5px;line-height:14.5px;color:#e9e9ee;letter-spacing:-0.846px;-webkit-text-stroke:0.22px #272a33;">-20</span>
<div style="left:1038.0px;top:1034px;width:1.4px;height:3.4px;background:#e8e8e8;"></div>
<span id="t60" class="t" style="left:1029.30px;top:1036.53px;font-size:14.5px;line-height:14.5px;color:#e9e9ee;letter-spacing:-0.846px;-webkit-text-stroke:0.22px #272a33;">-15</span>
<div style="left:1071.5px;top:1034px;width:1.4px;height:3.4px;background:#e8e8e8;"></div>
<span id="t61" class="t" style="left:1062.80px;top:1036.53px;font-size:14.5px;line-height:14.5px;color:#e9e9ee;letter-spacing:-0.846px;-webkit-text-stroke:0.22px #272a33;">-10</span>
<div style="left:1105.0px;top:1034px;width:1.4px;height:3.4px;background:#e8e8e8;"></div>
<span id="t62" class="t" style="left:1100.10px;top:1036.53px;font-size:14.5px;line-height:14.5px;color:#e9e9ee;letter-spacing:-1.229px;-webkit-text-stroke:0.22px #272a33;">-5</span>
<div style="left:1139.5px;top:1034px;width:1.4px;height:3.4px;background:#e8e8e8;"></div>
<span id="t63" class="t" style="left:1132.90px;top:1036.53px;font-size:14.5px;line-height:14.5px;color:#e9e9ee;-webkit-text-stroke:0.22px #272a33;">0</span>
<div style="left:693px;top:1050.4px;width:34.6px;height:34.8px;background:#3c404b;border-radius:5px;"></div>
<svg style="left:0;top:0;overflow:visible" width="1" height="1"><g transform="translate(698.4 1058)"><path d="M0.4 7.4 Q0.4 6.4 1.4 6.4 H4.4 L9.6 0.6 Q10.4 0 10.4 1 V19.6 Q10.4 20.6 9.6 20 L4.4 14.4 H1.4 Q0.4 14.4 0.4 13.4Z" fill="#fefefe"/><path d="M14.2 5.6 Q17 10.3 14.2 15" fill="none" stroke="#fefefe" stroke-width="2.4" stroke-linecap="round"/><path d="M19 1.8 Q24.6 10.3 19 18.8" fill="none" stroke="#fefefe" stroke-width="2.4" stroke-linecap="round"/></g></svg>
<div style="left:729.5px;top:1075px;width:385px;height:6px;background:#4b6cd9;border-radius:3px;"></div>
<div style="left:752.0px;top:1072px;width:1.1px;height:15px;background:rgba(170,174,186,0.5);"></div>
<div style="left:767.1px;top:1072px;width:1.1px;height:15px;background:rgba(170,174,186,0.5);"></div>
<div style="left:783.1px;top:1072px;width:1.1px;height:15px;background:rgba(170,174,186,0.5);"></div>
<div style="left:802.5px;top:1072px;width:1.1px;height:15px;background:rgba(170,174,186,0.5);"></div>
<div style="left:824.5px;top:1072px;width:1.1px;height:15px;background:rgba(170,174,186,0.5);"></div>
<div style="left:851.5px;top:1072px;width:1.1px;height:15px;background:rgba(170,174,186,0.5);"></div>
<div style="left:884.0px;top:1072px;width:1.1px;height:15px;background:rgba(170,174,186,0.5);"></div>
<div style="left:927.1px;top:1072px;width:1.1px;height:15px;background:rgba(170,174,186,0.5);"></div>
<div style="left:993.8px;top:1072px;width:1.1px;height:15px;background:rgba(170,174,186,0.5);"></div>
<div style="left:1110.4px;top:1072px;width:29.6px;height:14px;background:#fefefe;border-radius:5px;"></div>
<div style="left:682px;top:1092px;width:469px;height:1px;background:#353944;"></div>
<div style="left:682px;top:1129px;width:470px;height:18px;background:#272a33;"></div>
<div style="left:682px;top:1100px;width:469px;height:47.3px;overflow:hidden">
<span id="t64" class="t" style="left:14.40px;top:3.19px;font-size:17.5px;line-height:17.5px;color:#fefefe;letter-spacing:-0.147px;-webkit-text-stroke:0.22px #272a33;">Mic/Aux</span>
<span id="t65" class="t" style="left:401.30px;top:2.66px;font-size:18.6px;line-height:18.6px;color:#999999;letter-spacing:0.569px;-webkit-text-stroke:0.22px #272a33;">0.0 dB</span>
<div style="left:47.50px;top:29.00px;width:277.5px;height:10px;background:#1f6b21;"></div>
<div style="left:325.00px;top:29.00px;width:74px;height:10px;background:#7a5a15;"></div>
<div style="left:399.00px;top:29.00px;width:60px;height:10px;background:#7c1a24;"></div>
<div style="left:47.50px;top:41.00px;width:277.5px;height:10px;background:#1f6b21;"></div>
<div style="left:325.00px;top:41.00px;width:74px;height:10px;background:#7a5a15;"></div>
<div style="left:399.00px;top:41.00px;width:60px;height:10px;background:#7c1a24;"></div>
<div style="left:47.50px;top:39.00px;width:411.5px;height:2px;background:#0f3d12;"></div>
<div style="left:325.00px;top:39.00px;width:74px;height:2px;background:#4a360c;"></div>
<div style="left:399.00px;top:39.00px;width:60px;height:2px;background:#4d0f15;"></div>
<div style="left:52.60px;top:29.00px;width:2.4px;height:22px;background:#143f15;"></div>
<div style="left:79.00px;top:29.00px;width:4px;height:10px;background:#4be04b;"></div>
<div style="left:79.00px;top:41.00px;width:4px;height:10px;background:#4be04b;"></div>
<div style="left:11.00px;top:29.00px;width:34.6px;height:34.8px;background:#3c404b;border-radius:5px;"></div>
<svg style="left:-682px;top:-1100px;overflow:visible" width="1" height="1"><circle cx="710.4" cy="1137.8" r="2.9" fill="#fefefe"/><circle cx="710.4" cy="1146.8" r="2.9" fill="#fefefe"/><circle cx="710.4" cy="1155.8" r="2.9" fill="#fefefe"/></svg>
</div>
<div style="left:682px;top:1147px;width:486px;height:1px;background:#3c404b;"></div>
<svg style="left:0;top:0;overflow:visible" width="1" height="1"><path d="M699.73 1166.76 L699.89 1165.29 L702.11 1165.29 L702.27 1166.76 L704.02 1167.49 L705.17 1166.56 L706.74 1168.13 L705.81 1169.28 L706.54 1171.03 L708.01 1171.19 L708.01 1173.41 L706.54 1173.57 L705.81 1175.32 L706.74 1176.47 L705.17 1178.04 L704.02 1177.11 L702.27 1177.84 L702.11 1179.31 L699.89 1179.31 L699.73 1177.84 L697.98 1177.11 L696.83 1178.04 L695.26 1176.47 L696.19 1175.32 L695.46 1173.57 L693.99 1173.41 L693.99 1171.19 L695.46 1171.03 L696.19 1169.28 L695.26 1168.13 L696.83 1166.56 L697.98 1167.49Z M698.40 1172.30 a2.6 2.6 0 1 0 5.2 0 a2.6 2.6 0 1 0 -5.2 0Z" fill="#fefefe" fill-rule="evenodd" stroke="#fefefe" stroke-width="0.5" stroke-linejoin="round"/></svg>
<svg style="left:0;top:0;overflow:visible" width="1" height="1"><path d="M709.43 1162.45 L709.53 1161.55 L710.87 1161.55 L710.97 1162.45 L712.03 1162.88 L712.73 1162.32 L713.68 1163.27 L713.12 1163.97 L713.55 1165.03 L714.45 1165.13 L714.45 1166.47 L713.55 1166.57 L713.12 1167.63 L713.68 1168.33 L712.73 1169.28 L712.03 1168.72 L710.97 1169.15 L710.87 1170.05 L709.53 1170.05 L709.43 1169.15 L708.37 1168.72 L707.67 1169.28 L706.72 1168.33 L707.28 1167.63 L706.85 1166.57 L705.95 1166.47 L705.95 1165.13 L706.85 1165.03 L707.28 1163.97 L706.72 1163.27 L707.67 1162.32 L708.37 1162.88Z M708.90 1165.80 a1.3 1.3 0 1 0 2.6 0 a1.3 1.3 0 1 0 -2.6 0Z" fill="#fefefe" fill-rule="evenodd" stroke="#fefefe" stroke-width="0.5" stroke-linejoin="round"/></svg>
<svg style="left:0;top:0;overflow:visible" width="1" height="1"><circle cx="754.7" cy="1162.6000000000001" r="2.7" fill="#fefefe"/><circle cx="754.7" cy="1170.4" r="2.7" fill="#fefefe"/><circle cx="754.7" cy="1178.2" r="2.7" fill="#fefefe"/></svg>
<div style="left:1183px;top:868px;width:350px;height:47px;background:#3c404b;border-radius:6px;"></div>
<div style="left:1497.6px;top:870px;width:1px;height:43px;background:#2a2d36;"></div>
<span id="t66" class="t" style="left:1196.20px;top:882.47px;font-size:20px;line-height:20px;color:#fefefe;letter-spacing:-0.754px;-webkit-text-stroke:0.22px #3c404b;">Fade</span>
<svg style="left:1508.5px;top:887px;" width="15" height="9" viewBox="0 0 15 9"><path d="M0.2 0.4H14.8L7.5 8.6Z" fill="#fefefe"/></svg>
<span id="t67" class="t" style="left:1183.00px;top:935.67px;font-size:20px;line-height:20px;color:#fefefe;letter-spacing:0.647px;-webkit-text-stroke:0.22px #272a33;">Duration</span>
<div style="left:1269.4px;top:921.5px;width:263.6px;height:47px;background:#3c404b;border-radius:6px;"></div>
<div style="left:1497.6px;top:923px;width:1px;height:44px;background:#2a2d36;"></div>
<div style="left:1498px;top:944.6px;width:35px;height:1px;background:#2a2d36;"></div>
<span id="t68" class="t" style="left:1292.00px;top:935.67px;font-size:20px;line-height:20px;color:#fefefe;letter-spacing:-0.237px;-webkit-text-stroke:0.22px #3c404b;">300 ms</span>
<svg style="left:0;top:0;overflow:visible" width="1" height="1"><path d="M1510 936.6L1516 930.1999999999999L1522 936.6" stroke="#fefefe" stroke-width="1.9" fill="none" stroke-linejoin="miter" stroke-linecap="round"/></svg>
<svg style="left:0;top:0;overflow:visible" width="1" height="1"><path d="M1510 953.1999999999999L1516 959.6L1522 953.1999999999999" stroke="#fefefe" stroke-width="1.9" fill="none" stroke-linejoin="miter" stroke-linecap="round"/></svg>
<div style="left:1406px;top:972.4px;width:38px;height:40.6px;background:#3c404b;border-radius:6px;"></div>
<svg style="left:0;top:0;overflow:visible" width="1" height="1"><path d="M1415.0 992.9H1435.8000000000002M1425.4 982.5V1003.3" stroke="#fefefe" stroke-width="2.8" fill="none"/></svg>
<svg style="left:0;top:0;overflow:visible" width="1" height="1"><g transform="translate(1470.6 993.2) scale(1.08)" fill="none" stroke="#e4e4e8"><path d="M-9.7 -7.6H9.7" stroke-width="2.2"/><path d="M-3.6 -9.4H3.6" stroke-width="1.8"/><path d="M-7.4 -5.2V7 Q-7.4 9.2 -5.2 9.2H5.2Q7.4 9.2 7.4 7V-5.2" stroke-width="2.6"/><path d="M-2.6 -3.4V5.4M0 -3.4V5.4M2.6 -3.4V5.4" stroke-width="1.1"/></g></svg>
<svg style="left:0;top:0;overflow:visible" width="1" height="1"><circle cx="1514.2" cy="984.3" r="2.9" fill="#e4e4e8"/><circle cx="1514.2" cy="993.0" r="2.9" fill="#e4e4e8"/><circle cx="1514.2" cy="1001.7" r="2.9" fill="#e4e4e8"/></svg>
<div style="left:1557px;top:868px;width:434.5px;height:47px;background:#3c404b;border-radius:6px;"></div>
<span id="t69" class="t" style="left:1705.00px;top:882.47px;font-size:20px;line-height:20px;color:#fefefe;letter-spacing:0.084px;-webkit-text-stroke:0.22px #3c404b;">Start Streaming</span>
<div style="left:1557px;top:921.5px;width:434.5px;height:47px;background:#3c404b;border-radius:6px;"></div>
<span id="t70" class="t" style="left:1705.60px;top:935.87px;font-size:20px;line-height:20px;color:#fefefe;letter-spacing:-0.017px;-webkit-text-stroke:0.22px #3c404b;">Start Recording</span>
<div style="left:1557px;top:975px;width:381px;height:47px;background:#3c404b;border-radius:6px;"></div>
<span id="t71" class="t" style="left:1657.30px;top:989.07px;font-size:20px;line-height:20px;color:#fefefe;letter-spacing:-0.062px;-webkit-text-stroke:0.22px #3c404b;">Start Virtual Camera</span>
<div style="left:1557px;top:1028.5px;width:434.5px;height:47px;background:#3c404b;border-radius:6px;"></div>
<span id="t72" class="t" style="left:1717.50px;top:1042.67px;font-size:20px;line-height:20px;color:#fefefe;letter-spacing:0.133px;-webkit-text-stroke:0.22px #3c404b;">Studio Mode</span>
<div style="left:1557px;top:1082px;width:434.5px;height:47px;background:#3c404b;border-radius:6px;"></div>
<span id="t73" class="t" style="left:1739.00px;top:1096.07px;font-size:20px;line-height:20px;color:#fefefe;letter-spacing:-0.181px;-webkit-text-stroke:0.22px #3c404b;">Settings</span>
<div style="left:1944px;top:975px;width:47.5px;height:47px;background:#3c404b;border-radius:6px;"></div>
<svg style="left:0;top:0;overflow:visible" width="1" height="1"><path d="M1965.84 990.29 L1966.07 988.13 L1969.33 988.13 L1969.56 990.29 L1972.12 991.35 L1973.81 989.99 L1976.11 992.29 L1974.75 993.98 L1975.81 996.54 L1977.97 996.77 L1977.97 1000.03 L1975.81 1000.26 L1974.75 1002.82 L1976.11 1004.51 L1973.81 1006.81 L1972.12 1005.45 L1969.56 1006.51 L1969.33 1008.67 L1966.07 1008.67 L1965.84 1006.51 L1963.28 1005.45 L1961.59 1006.81 L1959.29 1004.51 L1960.65 1002.82 L1959.59 1000.26 L1957.43 1000.03 L1957.43 996.77 L1959.59 996.54 L1960.65 993.98 L1959.29 992.29 L1961.59 989.99 L1963.28 991.35Z M1963.44 998.40 a4.264 4.264 0 1 0 8.528 0 a4.264 4.264 0 1 0 -8.528 0Z" fill="#fefefe" fill-rule="evenodd" stroke="#fefefe" stroke-width="0.5" stroke-linejoin="round"/></svg>
<div style="left:0px;top:1200px;width:2000px;height:46px;background:#272a33;"></div>
<div style="left:0px;top:1200px;width:2000px;height:1px;background:#3a3d48;"></div>
<div style="left:0px;top:1245px;width:2000px;height:1px;background:#30333c;"></div>
<div style="left:1364.6px;top:1200px;width:1px;height:46px;background:#343741;"></div>
<div style="left:1411px;top:1200px;width:1px;height:46px;background:#343741;"></div>
<div style="left:1542.4px;top:1200px;width:1px;height:46px;background:#343741;"></div>
<div style="left:1675px;top:1200px;width:1px;height:46px;background:#343741;"></div>
<div style="left:1789px;top:1200px;width:1px;height:46px;background:#343741;"></div>
<svg style="left:0;top:0;overflow:visible" width="1" height="1"><rect x="1376.2" y="1225.1999999999998" width="4.4" height="6.4" rx="1" fill="#5c5f68"/><rect x="1382.2" y="1220.8" width="4.4" height="10.8" rx="1" fill="#5c5f68"/><rect x="1388.2" y="1216.0" width="4.4" height="15.6" rx="1" fill="#5c5f68"/><rect x="1394.2" y="1211.1999999999998" width="4.4" height="20.4" rx="1" fill="#5c5f68"/></svg>
<svg style="left:0;top:0;overflow:visible" width="1" height="1"><g transform="translate(1434.2 1222.4)" fill="none" stroke="#777a82" stroke-width="1.7" stroke-linecap="round"><circle r="3.1" fill="#777a82" stroke="none"/><path d="M-5.2 -5.6 Q-8.4 0 -5.2 5.6M5.2 -5.6 Q8.4 0 5.2 5.6" /><path d="M-8.8 -7.6 Q-13 0 -8.8 7.6M8.8 -7.6 Q13 0 8.8 7.6" stroke="#4a4d56"/></g></svg>
<span id="t74" class="t" style="left:1455.20px;top:1212.87px;font-size:20px;line-height:20px;color:#999999;letter-spacing:-0.276px;-webkit-text-stroke:0.22px #272a33;">00:00:00</span>
<svg style="left:0;top:0;overflow:visible" width="1" height="1"><circle cx="1566" cy="1222.4" r="10.2" fill="#696c74"/></svg>
<span id="t75" class="t" style="left:1587.20px;top:1212.87px;font-size:20px;line-height:20px;color:#999999;letter-spacing:-0.276px;-webkit-text-stroke:0.22px #272a33;">00:00:00</span>
<span id="t76" class="t" style="left:1686.00px;top:1212.87px;font-size:20px;line-height:20px;color:#fefefe;letter-spacing:-1.018px;-webkit-text-stroke:0.22px #272a33;">CPU: 1.4%</span>
<span id="t77" class="t" style="left:1800.60px;top:1212.87px;font-size:20px;line-height:20px;color:#fefefe;letter-spacing:-0.543px;-webkit-text-stroke:0.22px #272a33;">30.00 / 30.00 FPS</span>
<svg style="left:0;top:0;overflow:visible" width="1" height="1"><rect x="1994.9" y="1239.1" width="2.8" height="2.8" fill="#c4c4c8"/><rect x="1990.7" y="1239.1" width="2.8" height="2.8" fill="#c4c4c8"/><rect x="1986.5" y="1239.1" width="2.8" height="2.8" fill="#c4c4c8"/><rect x="1994.9" y="1234.8" width="2.8" height="2.8" fill="#c4c4c8"/><rect x="1990.7" y="1234.8" width="2.8" height="2.8" fill="#c4c4c8"/><rect x="1994.9" y="1230.5" width="2.8" height="2.8" fill="#c4c4c8"/></svg>
<svg style="left:0;top:0;overflow:visible" width="1" height="1"><path d="M0 1246V1238Q0 1246 8 1246Z" fill="#0d2226"/><path d="M2000 1246V1238Q2000 1246 1992 1246Z" fill="#15171c"/></svg>
<div style="left:573.8px;top:495.2px;width:825.6px;height:221.6px;background:#1d1f26;border-radius:9px;border:1px solid #5a5c63;box-shadow:0 10px 26px rgba(0,0,0,0.45),0 0 3px rgba(0,0,0,0.35);overflow:hidden;"><div style="left:0;top:0;width:824px;height:41px;background:#f3f3f3"></div></div>
<svg style="left:586.0px;top:505.29999999999995px;" width="21.2" height="21.2" viewBox="0 0 100 100"><circle cx="50" cy="50" r="50" fill="#000"/><g fill="#f3f3f3" stroke="#f3f3f3" stroke-width="1.8" stroke-linejoin="round"><path d="M30.5 15 Q10 35 50 51.5 Q27 36 34.5 16 Z"/><g transform="rotate(120 50 50)"><path d="M30.5 15 Q10 35 50 51.5 Q27 36 34.5 16 Z"/></g><g transform="rotate(240 50 50)"><path d="M30.5 15 Q10 35 50 51.5 Q27 36 34.5 16 Z"/></g></g></svg>
<span id="t78" class="t" style="left:617.60px;top:509.01px;font-size:17px;line-height:17px;color:#1a1a1a;letter-spacing:-0.040px;-webkit-text-stroke:0.22px #f3f3f3;">Add Scene</span>
<svg style="left:0;top:0;overflow:visible" width="1" height="1"><path d="M1368 510.4L1379.4 521.8M1379.4 510.4L1368 521.8" stroke="#1a1a1a" stroke-width="1.3" fill="none"/></svg>
<span id="t79" class="t" style="left:591.20px;top:558.07px;font-size:20px;line-height:20px;color:#fefefe;letter-spacing:0.017px;-webkit-text-stroke:0.22px #1d1f26;">Please enter the name of the scene</span>
<div style="left:592px;top:589.6px;width:789.4px;height:46.6px;background:#1d1f26;border-radius:5px;border:1.6px solid #2a4cb4;"></div>
<div style="left:608px;top:600px;width:70.2px;height:25.8px;background:#284cb8;"></div>
<span id="t80" class="t" style="left:608.60px;top:603.07px;font-size:20px;line-height:20px;color:#fefefe;letter-spacing:-0.811px;-webkit-text-stroke:0.22px #284cb8;">Scene 2</span>
<div style="left:888px;top:648.4px;width:78.8px;height:47.6px;background:#3c404b;border-radius:6px;"></div>
<span id="t81" class="t" style="left:915.00px;top:662.07px;font-size:20px;line-height:20px;color:#fefefe;letter-spacing:-1.500px;-webkit-text-stroke:0.22px #3c404b;">OK</span>
<div style="left:975.8px;top:648.4px;width:111.4px;height:47.6px;background:#3c404b;border-radius:6px;"></div>
<span id="t82" class="t" style="left:1001.00px;top:662.07px;font-size:20px;line-height:20px;color:#fefefe;letter-spacing:-0.562px;-webkit-text-stroke:0.22px #3c404b;">Cancel</span>
</div>
</body></html>
